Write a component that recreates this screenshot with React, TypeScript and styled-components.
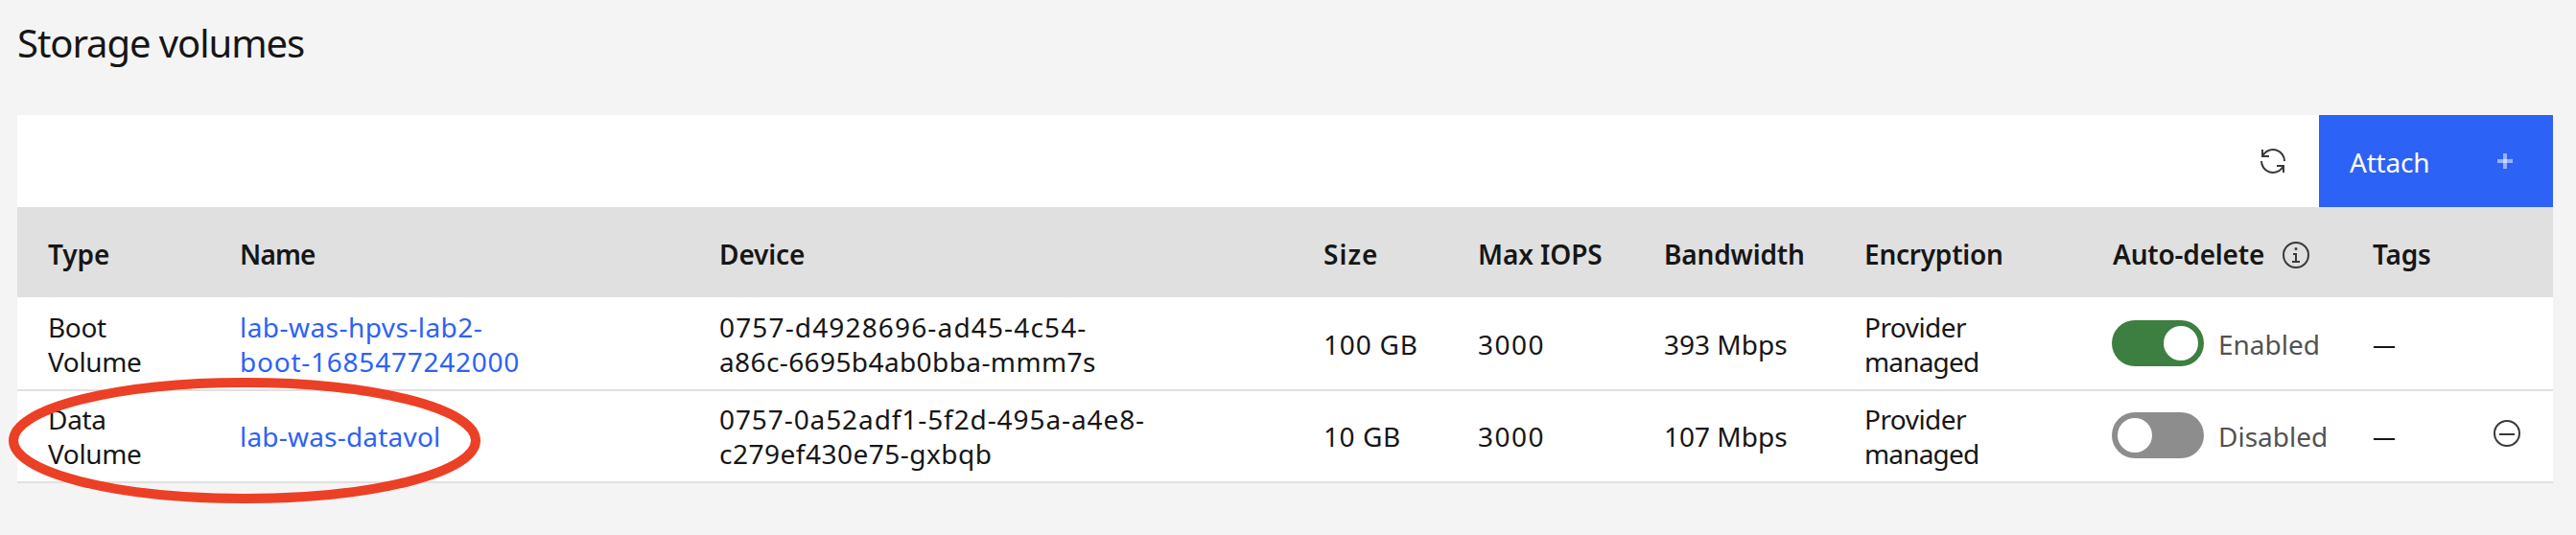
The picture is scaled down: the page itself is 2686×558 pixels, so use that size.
import React from "react";
import styled, { createGlobalStyle } from "styled-components";

const GlobalStyle = createGlobalStyle`
  * { box-sizing: border-box; }
  body {
    margin: 0;
    background: #f4f4f4;
    color: #161616;
    font-family: "Noto Sans", "Liberation Sans", sans-serif;
    font-size: 28px;
    line-height: 36px;
  }
`;

const Page = styled.main`
  position: relative;
  height: 558px;
  padding: 17px 24px 0 18px;
  overflow: hidden;
`;

const Title = styled.h1`
  margin: 0 0 47px;
  font-size: 40px;
  font-weight: 400;
  line-height: 56px;
  letter-spacing: -1.06px;
`;

const Toolbar = styled.div`
  display: flex;
  justify-content: flex-end;
  height: 96px;
  background: #fff;
`;

const RefreshButton = styled.button`
  display: grid;
  place-items: center;
  width: 96px;
  padding: 0;
  border: 0;
  background: none;
  color: #393939;
`;

const AttachButton = styled.button`
  display: flex;
  align-items: center;
  justify-content: space-between;
  width: 244px;
  padding: 0 42px 0 32px;
  border: 0;
  background: #2d62f6;
  color: #fff;
  font: inherit;
  letter-spacing: -0.2px;

  span { padding-top: 2px; }
`;

const Table = styled.div`
  border-bottom: 2px solid #e0e0e0;
`;

const Row = styled.div<{ $divided?: boolean }>`
  display: grid;
  grid-template-columns: 200px 500px 630px 161px 194px 209px 259px 271px 124px 1fr;
  align-items: center;
  height: 96px;
  padding: 0 0 0 32px;
  border-top: 2px solid ${(p) => (p.$divided ? "#e0e0e0" : "#fff")};
  background: #fff;
  white-space: nowrap;
`;

const HeaderRow = styled(Row)`
  height: 94px;
  padding-top: 4px;
  border-top: 0;
  background: #e0e0e0;
  font-weight: 600;
`;

const HeaderCell = styled.div`
  display: flex;
  align-items: center;
  gap: 17px;

  svg { margin-top: 2px; color: #393939; }
`;

const Line = styled.span<{ $tracking?: number }>`
  display: block;
  letter-spacing: ${(p) => p.$tracking ?? 0}px;
`;

const NameLink = styled.a`
  color: #2d62f6;
  text-decoration: none;
`;

const AutoDelete = styled.div`
  display: flex;
  align-items: center;
  gap: 15px;
  color: #525252;
`;

const Track = styled.span<{ $on: boolean }>`
  display: flex;
  justify-content: ${(p) => (p.$on ? "flex-end" : "flex-start")};
  width: 96px;
  height: 48px;
  margin: 0 0 2px -1px;
  padding: 6px;
  border-radius: 24px;
  background: ${(p) => (p.$on ? "#3d7f40" : "#8d8d8d")};
`;

const Knob = styled.span`
  width: 36px;
  height: 36px;
  border-radius: 50%;
  background: #fff;
`;

const EmptyTag = styled.span`
  font-size: 24px;
  font-weight: 500;
`;

const DetachButton = styled.button`
  display: block;
  width: 32px;
  height: 32px;
  margin: 0 0 6px;
  padding: 0;
  border: 0;
  background: none;
  color: #393939;

  svg { display: block; }
`;

const Highlight = styled.svg`
  position: absolute;
  left: 9px;
  top: 394px;
  pointer-events: none;
`;

const Icon = ({ children }: { children: React.ReactNode }) => (
  <svg width="32" height="32" viewBox="0 0 32 32" fill="currentColor" aria-hidden="true">
    {children}
  </svg>
);

const RefreshIcon = () => (
  <Icon>
    <path d="M12 10H6.78A11 11 0 0 1 27 16h2A13 13 0 0 0 6 7.68V4H4v8h8zM20 22h5.22A11 11 0 0 1 5 16H3a13 13 0 0 0 23 8.32V28h2v-8h-8z" />
  </Icon>
);

const AddIcon = () => (
  <svg width="16" height="16" viewBox="0 0 16 16" fill="#fff" fillOpacity="0.5" aria-hidden="true">
    <rect x="6" width="4" height="16" />
    <rect y="6" width="16" height="4" />
  </svg>
);

const InfoIcon = () => (
  <Icon>
    <circle cx="16" cy="16" r="13" fill="none" stroke="currentColor" strokeWidth="2" />
    <path d="M17 22v-8h-4v2h2v6h-3v2h8v-2zM16 8a1.5 1.5 0 1 0 1.5 1.5A1.5 1.5 0 0 0 16 8z" />
  </Icon>
);

const SubtractIcon = () => (
  <Icon>
    <circle cx="16" cy="16" r="13" fill="none" stroke="currentColor" strokeWidth="2" />
    <rect x="8" y="16" width="16" height="2" />
  </Icon>
);

type Text = [string, number];

interface Volume {
  type: Text[];
  name: Text[];
  device: Text[];
  size: Text[];
  iops: Text[];
  bandwidth: Text[];
  encryption: Text[];
  autoDelete: boolean;
  detachable: boolean;
}

const headers: Text[] = [
  ["Type", -0.08],
  ["Name", -0.82],
  ["Device", -0.12],
  ["Size", 1.04],
  ["Max IOPS", -0.1],
  ["Bandwidth", -0.16],
  ["Encryption", -0.24],
  ["Auto-delete", -0.19],
  ["Tags", -0.2],
];

const encryption: Text[] = [["Provider", -0.54], ["managed", -0.82]];

const volumes: Volume[] = [
  {
    type: [["Boot", -0.36], ["Volume", -0.38]],
    name: [["lab-was-hpvs-lab2-", 0.45], ["boot-1685477242000", 0.76]],
    device: [["0757-d4928696-ad45-4c54-", 1.15], ["a86c-6695b4ab0bba-mmm7s", 0.4]],
    size: [["100 GB", 0.8]],
    iops: [["3000", 1.5]],
    bandwidth: [["393 Mbps", 0]],
    encryption,
    autoDelete: true,
    detachable: false,
  },
  {
    type: [["Data", -0.3], ["Volume", -0.38]],
    name: [["lab-was-datavol", 0.2]],
    device: [["0757-0a52adf1-5f2d-495a-a4e8-", 0.91], ["c279ef430e75-gxbqb", 0.5]],
    size: [["10 GB", 0.6]],
    iops: [["3000", 1.5]],
    bandwidth: [["107 Mbps", 0]],
    encryption,
    autoDelete: false,
    detachable: true,
  },
];

const Lines = ({ items }: { items: Text[] }) => (
  <div>
    {items.map(([text, tracking]) => (
      <Line key={text} $tracking={tracking}>{text}</Line>
    ))}
  </div>
);

export default function App() {
  return (
    <Page>
      <GlobalStyle />
      <Title>Storage volumes</Title>
      <Toolbar>
        <RefreshButton aria-label="Refresh"><RefreshIcon /></RefreshButton>
        <AttachButton><span>Attach</span><AddIcon /></AttachButton>
      </Toolbar>
      <Table>
        <HeaderRow>
          {headers.map(([text, tracking]) => (
            <HeaderCell key={text}>
              <Line $tracking={tracking}>{text}</Line>
              {text === "Auto-delete" && <InfoIcon />}
            </HeaderCell>
          ))}
        </HeaderRow>
        {volumes.map((v, i) => (
          <Row key={v.name[0][0]} $divided={i > 0}>
            <Lines items={v.type} />
            <NameLink><Lines items={v.name} /></NameLink>
            <Lines items={v.device} />
            <Lines items={v.size} />
            <Lines items={v.iops} />
            <Lines items={v.bandwidth} />
            <Lines items={v.encryption} />
            <AutoDelete>
              <Track $on={v.autoDelete}><Knob /></Track>
              <Line>{v.autoDelete ? "Enabled" : "Disabled"}</Line>
            </AutoDelete>
            <EmptyTag>—</EmptyTag>
            {v.detachable && (
              <DetachButton aria-label="Detach"><SubtractIcon /></DetachButton>
            )}
          </Row>
        ))}
      </Table>
      <Highlight width="492" height="131" viewBox="0 0 492 131">
        <ellipse cx="246" cy="65.5" rx="241" ry="60.5" fill="none" stroke="#eb4025" strokeWidth="10" />
      </Highlight>
    </Page>
  );
}
